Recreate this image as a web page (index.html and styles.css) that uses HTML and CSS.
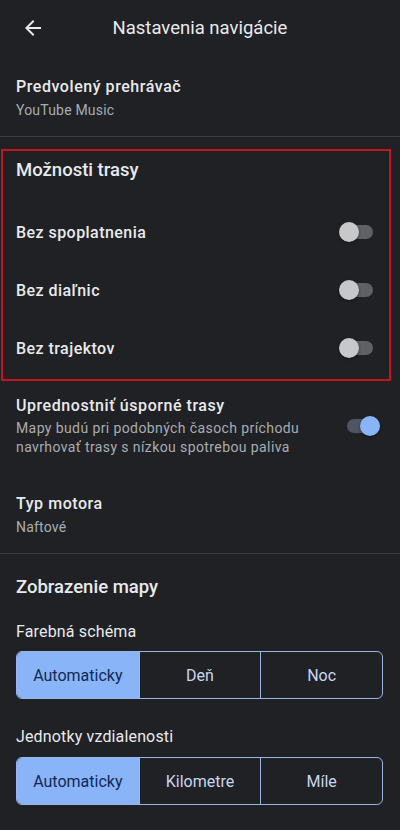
FILE: index.html
```html
<!DOCTYPE html>
<html lang="sk">
<head>
<meta charset="utf-8">
<link rel="stylesheet" href="styles.css">
</head>
<body>
<div class="app">
  <header class="topbar">
    <svg class="back" width="24" height="24" viewBox="0 0 24 24"><path d="M20 11H7.83l5.59-5.59L12 4l-8 8 8 8 1.41-1.41L7.83 13H20v-2z" fill="#e8eaed"/></svg>
    <div class="title">Nastavenia navigácie</div>
  </header>

  <div class="item first">
    <div class="item-title">Predvolený prehrávač</div>
    <div class="item-sub">YouTube Music</div>
  </div>
  <div class="divider"></div>

  <section class="highlight">
    <h2 class="section-title">Možnosti trasy</h2>
    <div class="row">
      <span class="row-label">Bez spoplatnenia</span>
      <span class="toggle off"><span class="track"></span><span class="knob"></span></span>
    </div>
    <div class="row">
      <span class="row-label">Bez diaľnic</span>
      <span class="toggle off"><span class="track"></span><span class="knob"></span></span>
    </div>
    <div class="row">
      <span class="row-label">Bez trajektov</span>
      <span class="toggle off"><span class="track"></span><span class="knob"></span></span>
    </div>
  </section>

  <div class="item eco">
    <div class="eco-text">
      <div class="item-title">Uprednostniť úsporné trasy</div>
      <div class="item-sub multi">Mapy budú pri podobných časoch príchodu navrhovať trasy s nízkou spotrebou paliva</div>
    </div>
    <span class="toggle on"><span class="track"></span><span class="knob"></span></span>
  </div>

  <div class="item motor">
    <div class="item-title">Typ motora</div>
    <div class="item-sub">Naftové</div>
  </div>
  <div class="divider"></div>

  <section class="map">
    <h2 class="section-title">Zobrazenie mapy</h2>
    <div class="label first-label">Farebná schéma</div>
    <div class="seg">
      <div class="seg-btn sel">Automaticky</div>
      <div class="seg-btn">Deň</div>
      <div class="seg-btn">Noc</div>
    </div>
    <div class="label second-label">Jednotky vzdialenosti</div>
    <div class="seg">
      <div class="seg-btn sel">Automaticky</div>
      <div class="seg-btn">Kilometre</div>
      <div class="seg-btn">Míle</div>
    </div>
  </section>
</div>
</body>
</html>
```

FILE: styles.css
```css
* { box-sizing: border-box; }
html, body {
  margin: 0;
  padding: 0;
  background: #202124;
}
body {
  font-family: Roboto, "Noto Sans", sans-serif;
  color: #e8eaed;
  width: 400px;
  height: 830px;
  overflow: hidden;
}
.topbar {
  height: 56px;
  display: flex;
  align-items: center;
  position: relative;
  padding-left: 21px;
}
.back { display: block; }
.title {
  flex: 1;
  text-align: center;
  font-size: 18.5px;
  margin-right: 45px;
  color: #e8eaed;
}
.item {
  padding-left: 16px;
}
.item.first {
  padding-top: 20px;
  padding-bottom: 16px;
}
.item-title {
  font-size: 16px;
  line-height: 22px;
  font-weight: 500;
  letter-spacing: 0.55px;
  color: #e8eaed;
}
.item-sub {
  font-size: 14px;
  line-height: 20px;
  color: #a9adb1;
  margin-top: 2px;
  letter-spacing: 0.2px;
}
.item-sub.multi {
  line-height: 19px;
  letter-spacing: 0.4px;
}
.divider {
  height: 1px;
  background: #3c3d41;
}
.highlight {
  margin: 12px 9px 0 1px;
  border: 2px solid #c5141c;
  padding: 7px 16px 2px 13px;
}
.section-title {
  margin: 0;
  font-size: 18.5px;
  line-height: 24px;
  font-weight: 500;
  color: #e8eaed;
}
.highlight .section-title {
  margin-bottom: 21px;
}
.row {
  height: 58px;
  display: flex;
  align-items: center;
  justify-content: space-between;
}
.row-label {
  font-size: 16px;
  font-weight: 500;
  letter-spacing: 0.45px;
  color: #e8eaed;
}
.toggle {
  position: relative;
  width: 34px;
  height: 20px;
  flex: none;
}
.toggle .track {
  position: absolute;
  left: 1px;
  right: 0;
  top: 3px;
  height: 14px;
  border-radius: 7px;
}
.toggle .knob {
  position: absolute;
  top: 0;
  width: 20px;
  height: 20px;
  border-radius: 50%;
  box-shadow: 0 1px 3px rgba(0,0,0,0.45);
}
.toggle.off .track { background: #5f6165; }
.toggle.off .knob { left: 0; background: #c8c8ca; }
.toggle.on .track { background: #4f5663; }
.toggle.on .knob { right: 0; background: #8ab4f8; }
.item.eco {
  padding-top: 14px;
  padding-right: 20px;
  display: flex;
  align-items: center;
  justify-content: space-between;
}
.eco-text {
  width: 310px;
}
.item.motor {
  padding-top: 36px;
  padding-bottom: 16px;
}
.map {
  padding: 21px 17px 0 16px;
}
.label {
  font-size: 16px;
  line-height: 22px;
  letter-spacing: 0.15px;
  color: #e8eaed;
}
.first-label { margin-top: 22px; margin-bottom: 8px; }
.second-label { margin-top: 27px; margin-bottom: 9px; }
.seg {
  display: grid;
  grid-template-columns: 1fr 1fr 1fr;
  height: 48px;
  border: 1px solid #9bb6e6;
  border-radius: 6px;
  overflow: hidden;
}
.seg-btn {
  display: flex;
  align-items: center;
  justify-content: center;
  font-size: 16px;
  color: #c8d6ef;
  border-left: 1px solid #9bb6e6;
}
.seg-btn:first-child { border-left: none; }
.seg-btn.sel {
  background: #8ab4f8;
  color: #0e2a55;
}
```
